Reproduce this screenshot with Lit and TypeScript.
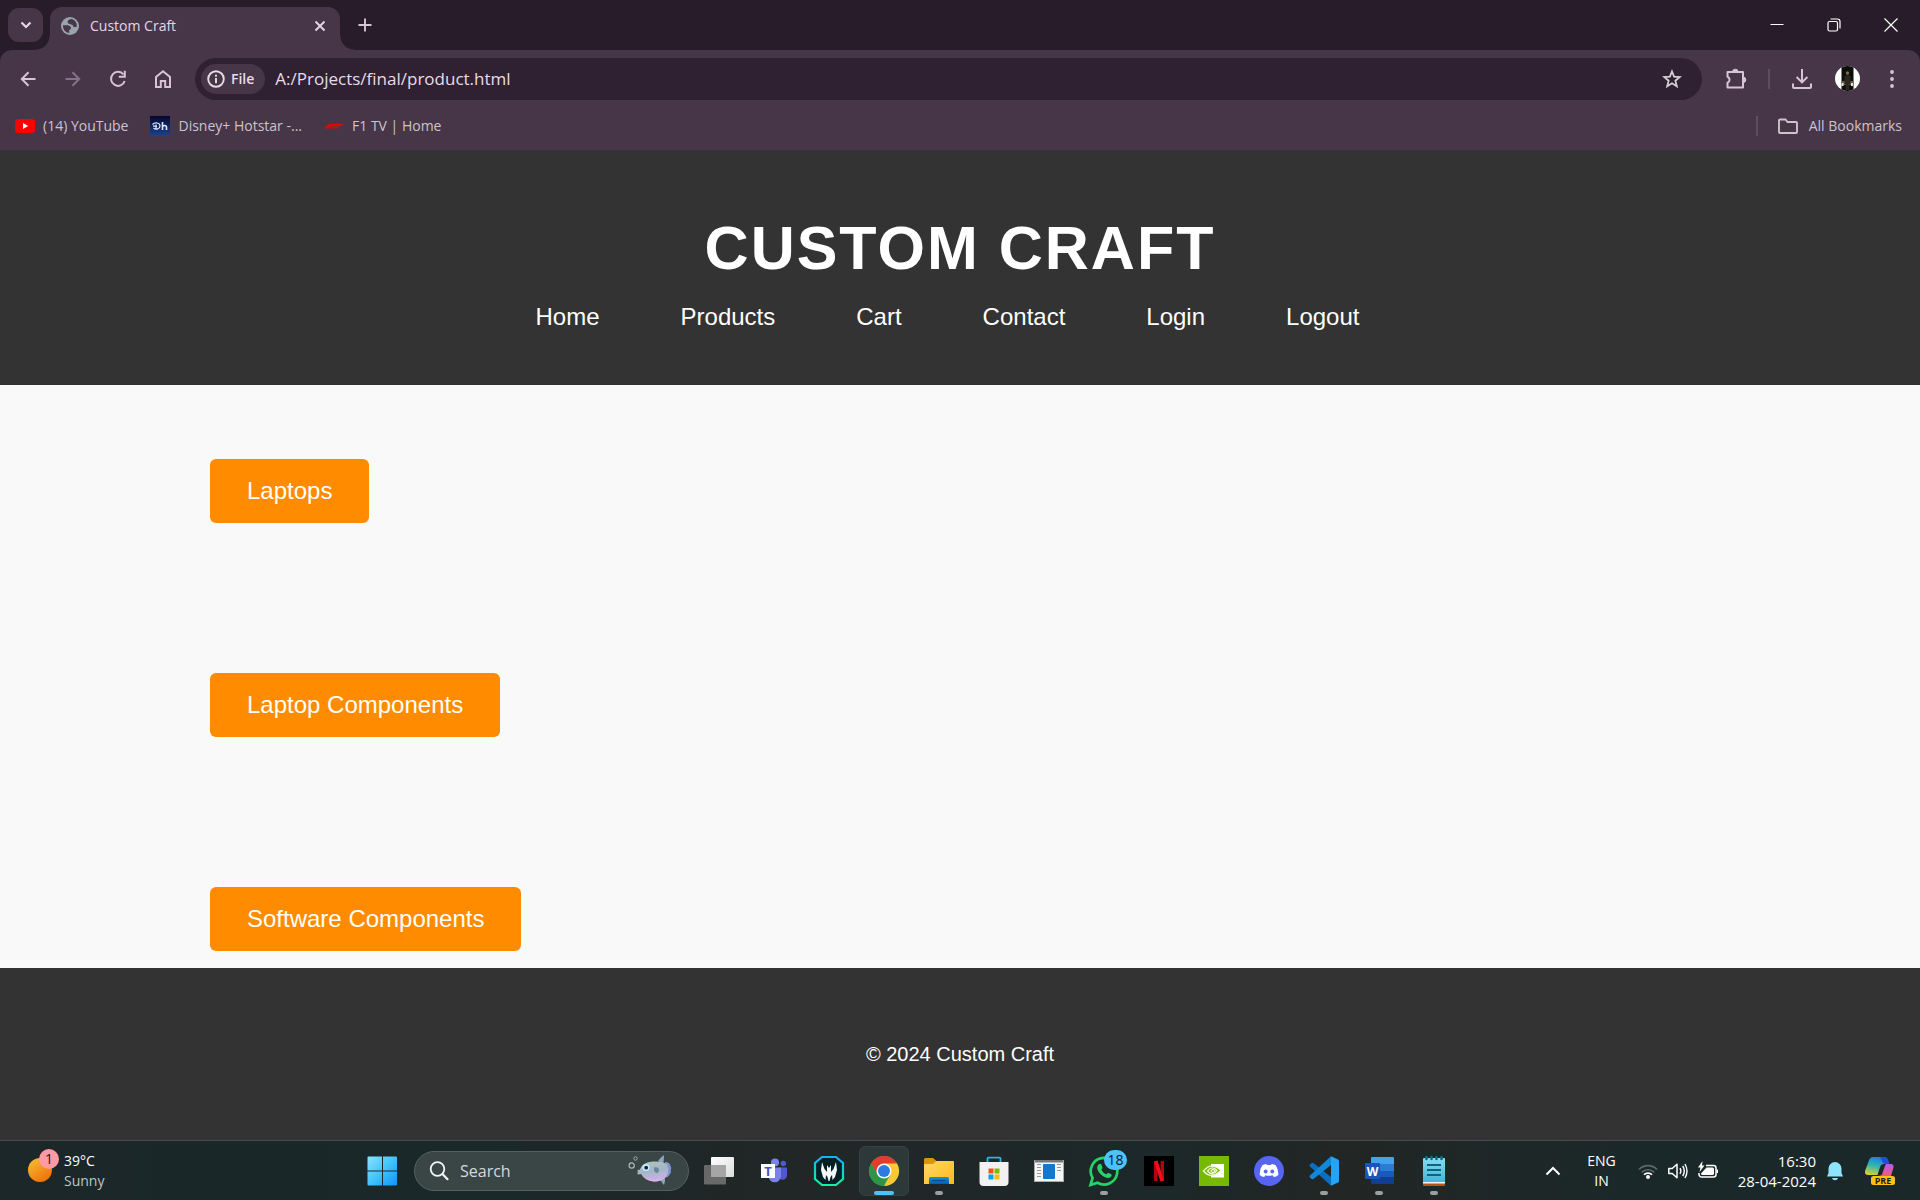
import { LitElement, html, svg, css, nothing } from "lit";
import { customElement, property } from "lit/decorators.js";

const icons: Record<string, unknown> = {
  chevronDown: svg`<path d="M5.5 7.5 10 12l4.5-4.5" fill="none" stroke="currentColor" stroke-width="2.2"/>`,
  globe: svg`<circle cx="10" cy="10" r="9" fill="#9aa3ab"/>
    <path d="M12 3q-4 .2-4.500 3 .2 2 3 2.200 2.800.3 3 2.800h3.300A7.200 7.200 0 0 0 12 3zM3 9.200h4.500q3.500.5 3.500 3-.2 1.300-1.800 1.800V17A7 7 0 0 1 3 9.200z" fill="#463648"/>`,
  close: svg`<path d="m5.500 5.500 9 9m0-9-9 9" fill="none" stroke="currentColor" stroke-width="1.900"/>`,
  plus: svg`<path d="M10 3.500v13M3.500 10h13" fill="none" stroke="currentColor" stroke-width="1.900"/>`,
  minimize: svg`<path d="M3.500 9.500h13" stroke="currentColor" stroke-width="1"/>`,
  restore: svg`<rect x="4" y="6.500" width="9.500" height="9.500" rx="1.500" fill="none" stroke="currentColor" stroke-width="1.200"/>
    <path d="M6.500 4h7a2.500 2.500 0 0 1 2.500 2.500v7" fill="none" stroke="currentColor" stroke-width="1.200"/>`,
  winClose: svg`<path d="m3.500 3.500 13 13m0-13-13 13" fill="none" stroke="currentColor" stroke-width="1.200"/>`,
  back: svg`<path d="M17.500 10H4m6.500-6.700L3.800 10l6.700 6.700" fill="none" stroke="currentColor" stroke-width="2"/>`,
  forward: svg`<path d="M2.500 10H16M9.500 3.300 16.200 10l-6.700 6.700" fill="none" stroke="currentColor" stroke-width="2"/>`,
  reload: svg`<path d="M16.700 12A7 7 0 1 1 15.500 5.500" fill="none" stroke="currentColor" stroke-width="2"/>
    <path d="M17.800 1.800v7h-7v-2h5v-5z" fill="currentColor"/>`,
  home: svg`<path d="M3 18V8l7-5.800L17 8v10h-4.800v-6H7.800v6z" fill="none" stroke="currentColor" stroke-width="2"/>`,
  info: svg`<circle cx="10" cy="10" r="7.800" fill="none" stroke="currentColor" stroke-width="1.900"/>
    <path d="M10 9v5.200M10 5.800v2" stroke="currentColor" stroke-width="1.900"/>`,
  star: svg`<path d="m10 2.500 2.100 5.200 5.600.4-4.300 3.600 1.400 5.500L10 14.200l-4.800 3 1.400-5.500-4.300-3.600 5.600-.4z" fill="none" stroke="currentColor" stroke-width="1.800"/>`,
  puzzle: svg`<path d="M1.500 3h15.500v15.500H1.500v-4.700a3.200 3.200 0 0 0 0-6z" fill="none" stroke="currentColor" stroke-width="2" stroke-linejoin="round"/>
    <path d="M6.500 3a2.800 2.800 0 0 1 5.600 0zM17 8a2.800 2.800 0 0 1 0 5.600z" fill="currentColor" stroke="currentColor"/>`,
  download: svg`<path d="M10 0v13M4.600 8l5.400 5.400L15.400 8M1 14.500V18a1 1 0 0 0 1 1h16a1 1 0 0 0 1-1v-3.500" fill="none" stroke="currentColor" stroke-width="2"/>`,
  dots: svg`<g fill="currentColor"><circle cx="10" cy="3" r="1.900"/><circle cx="10" cy="10" r="1.900"/><circle cx="10" cy="17" r="1.900"/></g>`,
  folder: svg`<path d="M1 4.500a1 1 0 0 1 1-1h5.500l2 2.500H18a1 1 0 0 1 1 1v9a1 1 0 0 1-1 1H2a1 1 0 0 1-1-1z" fill="none" stroke="currentColor" stroke-width="1.900"/>`,
  youtube: svg`<rect x="0" y="3" width="20" height="14" rx="3.500" fill="#f00"/><path d="m8 7 5.200 3L8 13z" fill="#fff"/>`,
  hotstar: svg`<defs><linearGradient id="hs" x1="0" y1="0" x2="0" y2="1"><stop offset="0" stop-color="#05062c"/><stop offset="1" stop-color="#1b4391"/></linearGradient></defs>
    <rect width="20" height="20" fill="url(#hs)"/>
    <path d="M2.500 8.500C5 6 10 6.500 10 10c0 3-4 3.800-6.500 2.300M3 10.200h4M6 8.500v5" fill="none" stroke="#dfe8ff" stroke-width="1.200"/>
    <path d="M12.500 6v8m0-3c.5-2 4-2.300 4 .3V14" fill="none" stroke="#dfe8ff" stroke-width="1.600"/>`,
  f1: svg`<path d="M0 12.500 3.500 9Q4.700 7.800 6.500 7.800H19.500L17 10H8.500Q7 10 6.200 10.800L4.500 12.500z" fill="#e10600"/><path d="M6 12.500 7.200 11.300Q7.900 10.500 9 10.500H15.500L13.500 12.500z" fill="#e10600"/>`,
  avatar: svg`<defs><clipPath id="av"><circle cx="12.500" cy="12.500" r="12.500"/></clipPath></defs>
    <g clip-path="url(#av)"><rect width="25" height="25" fill="#fff"/><rect x="6.500" width="12" height="25" fill="#0b0f0b"/>
    <rect x="6.500" y="15" width="12" height="4" fill="#6a5a44"/><circle cx="12.500" cy="7" r="1.700" fill="#8a6a45"/>
    <path d="M9.500 10q3-2 6 0v8h-1.300v6h-3.500v-6H9.500z" fill="#2c2620"/><path d="M6.500 17h2v3h-2zm9.500 0h2v3h-2z" fill="#e4e0d6"/></g>`,
  weather: svg`<defs><linearGradient id="sun" x1="0" y1="0" x2=".7" y2="1"><stop offset="0" stop-color="#f5c331"/><stop offset="1" stop-color="#f0700c"/></linearGradient></defs>
    <circle cx="12" cy="21" r="12" fill="url(#sun)"/><circle cx="21" cy="10" r="10" fill="#ff99a4"/>
    <text x="21" y="15" text-anchor="middle" font-size="14" fill="#1a1a1a">1</text>`,
  windows: svg`<defs><linearGradient id="wn" gradientUnits="userSpaceOnUse" x1="0" y1="0" x2="30" y2="30"><stop offset="0" stop-color="#8fe3ff"/><stop offset=".5" stop-color="#43c4fb"/><stop offset="1" stop-color="#0a93fb"/></linearGradient></defs>
    <path d="M1.500.5H15v14H.5v-13a1 1 0 0 1 1-1zM16 .5h13a1 1 0 0 1 1 1v13H16zM.5 15.500H15v14H1.500a1 1 0 0 1-1-1zM16 15.500h14v13a1 1 0 0 1-1 1H16z" fill="url(#wn)"/>`,
  search: svg`<circle cx="8.500" cy="8" r="6.800" fill="none" stroke="currentColor" stroke-width="1.800"/><path d="m13.500 13 5 5.200" stroke="currentColor" stroke-width="2.200" stroke-linecap="round"/>`,
  fish: svg`<defs><linearGradient id="fs" x1="0" y1="0" x2=".3" y2="1"><stop offset="0" stop-color="#b4c9b4"/><stop offset=".55" stop-color="#a3b6c9"/><stop offset="1" stop-color="#cbb0e0"/></linearGradient></defs>
    <path d="M30 6q3-4 6-6 0 5-.7 9zM32 24q2 4 4 6 1.500-4 1-7z" fill="#8aa6bd"/>
    <path d="M37 7q5 0 5.500 4 1.500 2 .3 4 .7 3-1.300 4.500-1 3-4.500 3z" fill="#7f96d2"/>
    <path d="M11.500 15Q14 7 25 6.500q10-.5 14 3 2.500 6-.5 12Q34 26.500 26 26.500q-9-.5-13-7.500l-3 .5q-1.500-1 0-2.200-1.200-1.800 0-2.600z" fill="url(#fs)"/>
    <path d="M16 22.500q9 4 20 1-4 3.500-10 3-6.500-.5-10-4z" fill="#dcb8ee" opacity=".8"/>
    <circle cx="18" cy="12.500" r="3.500" fill="#c4efff"/><circle cx="18.200" cy="12.700" r="1.900" fill="#10204a"/>
    <path d="M26 12.500q5-1 5 3-.5 3-3 2.500-2.500-2-2-5.500z" fill="#66889a"/>
    <circle cx="3.700" cy="10.500" r="2.600" fill="none" stroke="#a9bdb2" stroke-width="1.200"/><circle cx="7.500" cy="3.500" r="1.700" fill="none" stroke="#94a9a6"/>`,
  taskView: svg`<defs><linearGradient id="tv" x1="0" y1="0" x2="1" y2="1"><stop offset="0" stop-color="#fff"/><stop offset="1" stop-color="#dcdcdc"/></linearGradient></defs>
    <rect x="7" y="1" width="23" height="20" rx="1" fill="url(#tv)"/><rect x="0" y="9" width="22" height="19.500" rx="1" fill="#686868"/><rect x="7" y="9" width="15" height="12" fill="#a5a5a5"/>`,
  teams: svg`<circle cx="16" cy="6.500" r="4" fill="#7b83eb"/><circle cx="24.300" cy="7.500" r="2.800" fill="#5059c9"/>
    <path d="M20 11.500h8v8a4.500 4.500 0 0 1-7 3.500z" fill="#5059c9"/><path d="M9 11.500h13v8.500a6.300 6.300 0 0 1-12.600 0z" fill="#7b83eb"/>
    <rect x="2" y="8" width="14" height="14" fill="#fff"/><text x="9" y="20" text-anchor="middle" font-size="13" font-weight="700" fill="#4b53bc">T</text>`,
  predator: svg`<defs><linearGradient id="pr" x1="0" y1="0" x2="0" y2="1"><stop offset="0" stop-color="#19aef5"/><stop offset="1" stop-color="#12f2a0"/></linearGradient></defs>
    <path d="M8 1h14l7 6v16l-7 6H8l-7-6V7z" fill="#041f26" stroke="url(#pr)" stroke-width="2.200"/>
    <path d="m8 6 2.500 7 2.500 3V9l2 3 2-3v7l2.500-3L22 6l1 8-2 7-2.500 3-.5-5-1.500 2-1 4h-1l-1-4-1.500-2-.5 5L9 21l-2-7z" fill="#f4f9f9"/>`,
  chrome: svg`<circle cx="15" cy="15" r="15" fill="#34a853"/>
    <path d="M2 7.500A15 15 0 0 1 28 7.500L15 15l-6.500 3.700z" fill="#e33b2e"/>
    <path d="M15 7.500h13A15 15 0 0 1 15 30l6.500-11.300z" fill="#fcc934"/><path d="M2 7.500 8.500 18.700 15 22.500h2.200L15 30A15 15 0 0 1 2 7.500z" fill="#2d9547"/>
    <circle cx="15" cy="15" r="7.500" fill="#fff"/><circle cx="15" cy="15" r="6" fill="#2c7be5"/>`,
  explorer: svg`<defs><linearGradient id="ex" x1="0" y1="0" x2="1" y2="1"><stop offset="0" stop-color="#ffd968"/><stop offset="1" stop-color="#fbb91c"/></linearGradient><linearGradient id="eb" x1="0" y1="0" x2="0" y2="1"><stop offset="0" stop-color="#1790df"/><stop offset="1" stop-color="#0a5cae"/></linearGradient></defs>
    <path d="M0 3.500A1.500 1.500 0 0 1 1.500 2H9l3.500 3v4H0z" fill="#d9960a"/><path d="M0 9q0-1 1-1h8l3.500-3H29q1 0 1 1v22H0z" fill="url(#ex)"/>
    <path d="M5 28v-5.500A1.500 1.500 0 0 1 6.500 21h17a1.500 1.500 0 0 1 1.500 1.500V28z" fill="url(#eb)"/><path d="M8 24.500h14" stroke="#0a4a8e" stroke-width="1.200"/>`,
  store: svg`<path d="M8.500 7V2.500A.8.800 0 0 1 9.300 1.700h11.400a.8.800 0 0 1 .8.800V7" fill="none" stroke="#2ab3ee" stroke-width="1.800"/>
    <path d="M.5 6h29v20a4 4 0 0 1-4 4h-21a4 4 0 0 1-4-4z" fill="#f1f1f1"/>
    <path d="M9.500 12.500h5v5h-5z" fill="#f25022"/><path d="M15.500 12.500h5v5h-5z" fill="#7fba00"/><path d="M9.500 18.500h5v5h-5z" fill="#00a4ef"/><path d="M15.500 18.500h5v5h-5z" fill="#ffb900"/>`,
  windowApp: svg`<rect x="0" y="4" width="30" height="22" fill="#f5f5f5"/><path d="M0 4h30v2.500H0z" fill="#777"/><path d="M0 4h1v22H0zM29 4h1v22h-1zM0 25h30v1H0z" fill="#aaa"/>
    <rect x="9" y="8" width="12" height="15" rx="1" fill="#1277cf"/>
    <path d="M3 8.500h4M3 11.500h4M3 14.500h4M3 17.500h4M3 20.500h4M23 8.500h4M23 11.500h4M23 14.500h4" stroke="#999" stroke-width="1"/>`,
  whatsapp: svg`<path d="M1.500 29 3.600 22A13.300 13.300 0 1 1 8.500 26.800z" fill="none" stroke="#25d366" stroke-width="2.700"/>
    <path d="M9.500 8.500c1.500-1.300 2.500-.8 3 .5l1 2.500c.3.800-1.300 1.800-1 2.500 1 2 2.500 3.300 4.500 4.200.8.300 1.700-1.600 2.500-1.300l2.800 1.400c.8.400.2 2.200-.8 3-1.500 1-3.500.900-6-.2-3-1.400-5.500-4-6.800-7-.8-2-.7-4.300.8-5.600z" fill="#25d366"/>`,
  netflix: svg`<rect width="30" height="30" fill="#000"/><path d="M11.700 5v20M18.300 5v20" stroke="#b1060f" stroke-width="3.400"/><path d="M11.800 5 18.200 25" stroke="#f0101a" stroke-width="3.600"/>`,
  nvidia: svg`<rect width="30" height="30" fill="#76b900"/><rect x="12" y="8" width="13" height="13.500" fill="#fff"/>
    <path d="M4.500 15Q12 6.500 22 14q-8 9-17.500 1z" fill="#76b900"/>
    <path d="M4.500 15Q12 5.500 22 14.500 12 24 4.500 15zm4 0Q13 9 18 14.500 13 20.500 8.500 15zm3.500 0q2-3 4 0-2 3-4 0z" fill="none" stroke="#eef7da" stroke-width="1.300"/>`,
  discord: svg`<circle cx="15" cy="15" r="15" fill="#5865f2"/>
    <path d="M8.300 9.300Q10 8.200 12.300 7.900l.6 1.200q2.100-.3 4.200 0l.6-1.200q2.300.3 4 1.400 3 4.600 2.600 9.600-2 1.700-4.600 2.200l-1-1.800q-3.700 1-7.400 0l-1 1.800q-2.600-.5-4.600-2.200-.4-5 2.600-9.600z" fill="#fff"/>
    <ellipse cx="11.700" cy="15.500" rx="1.900" ry="2.100" fill="#5865f2"/><ellipse cx="18.300" cy="15.500" rx="1.900" ry="2.100" fill="#5865f2"/>`,
  vscode: svg`<path d="M22 .3 29 3.500q1 .5 1 1.500v20q0 1-1 1.500L22 29.700z" fill="#24a4f2"/>
    <path d="M22 29.700 1 10.500q-1-1 0-2L2.700 7q.8-.6 1.700 0L22 21z" fill="#0a6fc2"/><path d="M22 .3 1 19.500q-1 1 0 2L2.700 23q.8.600 1.700 0L22 9z" fill="#1488d8"/>`,
  word: svg`<path d="M8 1h21a1 1 0 0 1 1 1v6H7V2a1 1 0 0 1 1-1z" fill="#41a5ee"/><path d="M7 8h23v7H7z" fill="#2b7cd3"/><path d="M7 15h23v6H7z" fill="#185abd"/><path d="M7 21h23v6a1 1 0 0 1-1 1H8a1 1 0 0 1-1-1z" fill="#103f91"/>
    <rect x="1" y="7" width="15" height="16" rx="1" fill="#1a56b8"/><text x="8.500" y="19.500" text-anchor="middle" font-size="12" font-weight="700" fill="#fff">W</text>`,
  notepad: svg`<rect x="4" y="25" width="22" height="5" rx="1" fill="#b5550f"/><rect x="4" y="24" width="22" height="3.500" fill="#f5f5f5"/>
    <defs><linearGradient id="np" x1="0" y1="0" x2="0" y2="1"><stop offset="0" stop-color="#86dcf0"/><stop offset="1" stop-color="#45b5d6"/></linearGradient></defs>
    <path d="M4 3q0-1 1-1h20q1 0 1 1v23H4z" fill="url(#np)"/>
    <path d="M8 9h14M8 14h14M8 19h14" stroke="#0c6482" stroke-width="2"/>
    <path d="M7.500 1v2M12.500 1v2M17.500 1v2M22.500 1v2" stroke="#0f6a88" stroke-width="2.600" stroke-linecap="round"/>`,
  chevronUp: svg`<path d="m3.500 13.500 6.500-6.500 6.500 6.500" fill="none" stroke="currentColor" stroke-width="2"/>`,
  wifi: svg`<g fill="none" stroke-width="1.700"><path d="M1 8.500a12.500 12.500 0 0 1 18 0M3.800 11.400a8.600 8.600 0 0 1 12.400 0" stroke="#5d6869"/><path d="M6 13.800a5.400 5.400 0 0 1 8 0" stroke="#fff"/></g><circle cx="10" cy="16" r="2" fill="#fff"/>`,
  speaker: svg`<path d="M.8 7.500h3.400L9 3.200v13.600l-4.800-4.300H.8z" fill="none" stroke="currentColor" stroke-width="1.500" stroke-linejoin="round"/>
    <path d="M12 7.200q1.800 2.800 0 5.600M14.700 5q3.200 5 0 10M17 3q4 7 0 14" fill="none" stroke="currentColor" stroke-width="1.400"/>`,
  battery: svg`<path d="M8 4.500h7.500A2.500 2.500 0 0 1 18 7v6.500a2.500 2.500 0 0 1-2.500 2.500H3.500A2.500 2.500 0 0 1 1 13.500V12" fill="none" stroke="currentColor" stroke-width="1.500"/>
    <path d="M8.500 6.500h6a1.500 1.500 0 0 1 1.500 1.500v4.500a1.500 1.500 0 0 1-1.500 1.500h-10A1.500 1.500 0 0 1 3 12.500zM18.500 8.500h1.500v3.500h-1.500z" fill="currentColor"/>
    <path d="M4.500 0 0 6.500h2.500L1.500 11 6.500 4.500H4z" fill="currentColor"/>`,
  bell: svg`<path d="M9 1a6.500 6.500 0 0 1 6.500 6.500V12l1.500 3.500H1L2.500 12V7.500A6.500 6.500 0 0 1 9 1zM6 17h6q-.5 2.200-3 2.200T6 17z" fill="#8fe4fd"/>`,
  copilot: svg`<defs><linearGradient id="ca" x1=".6" y1="0" x2=".3" y2="1"><stop offset="0" stop-color="#1d7be8"/><stop offset=".5" stop-color="#2fb6b0"/><stop offset="1" stop-color="#d9d02e"/></linearGradient><linearGradient id="cb" x1=".5" y1="0" x2=".5" y2="1"><stop offset="0" stop-color="#b35cf5"/><stop offset="1" stop-color="#f5596e"/></linearGradient></defs>
    <path d="M8 1h11q3 0 4 3l1 4h-5q-3 0-4 3l-2.500 8H3q-3.500 0-3-4L4 4.500Q5 1 8 1z" fill="url(#ca)"/><path d="M15 1h4q3 0 4 3l1.200 4H20q-2 0-3-3z" fill="#1f4fd8"/>
    <path d="M21 8h5q3 0 2.500 3.500L26 20H13l2.500-.5q1.500-.5 2-2.500L20 10z" fill="url(#cb)"/>
    <rect x="6" y="20" width="24" height="9" rx="2.500" fill="#fcc21b"/><text x="18" y="28" text-anchor="middle" font-size="9" font-weight="700" fill="#1d1a10">PRE</text>`,
};

const icon = (name: string, w = 20, h = w) =>
  html`<svg class="icon" width=${w} height=${h} viewBox="0 0 ${w} ${h}" aria-hidden="true">${icons[name]}</svg>`;

const base = css`
  :host, *, *::before, *::after { box-sizing: border-box; }
  button, input { font: inherit; color: inherit; background: none; border: 0; padding: 0; margin: 0; min-width: 0; outline: none; }
  a { color: inherit; text-decoration: none; }
  ul { list-style: none; margin: 0; padding: 0; }
  .icon { display: block; flex: none; overflow: visible; }
`;

@customElement("browser-chrome")
export class BrowserChrome extends LitElement {
  @property() url = "A:/Projects/final/product.html";

  static styles = [base, css`
    :host { display: block; background: #281c2a; color: #e4d7e4; font: 14px/20px "Open Sans", "Noto Sans", sans-serif; }
    button { display: grid; place-items: center; }
    .strip { display: flex; align-items: center; height: 50px; padding: 0 1px 0 8px; }
    .tab-search { width: 35px; height: 34px; border-radius: 11px; background: #463648; }
    .tab { position: relative; align-self: flex-end; display: flex; align-items: center; width: 290px; height: 43px; margin: 0 15px 0 7px; padding: 0 10px 6px; border-radius: 12px 12px 0 0; background: #463648; }
    .tab::before, .tab::after { content: ""; position: absolute; bottom: 0; width: 14px; height: 14px; }
    .tab::before { right: 100%; background: radial-gradient(circle at 0 0, transparent 13px, #463648 14px); }
    .tab::after { left: 100%; background: radial-gradient(circle at 100% 0, transparent 13px, #463648 14px); }
    .tab-title { flex: 1; padding-left: 10px; }
    .new-tab { color: #d8c3d8; }
    .controls { display: flex; margin-left: auto; color: #fff; }
    .controls button { width: 57px; height: 50px; }
    .bar { display: flex; align-items: center; height: 57px; padding: 0 18px; background: #463648; border-radius: 12px 12px 0 0; color: #d8c3d8; }
    .nav { display: flex; gap: 25px; margin-right: 22px; }
    .nav button:disabled { color: #85718a; }
    .omni { flex: 1; display: flex; align-items: center; height: 42px; padding: 0 20px 0 6px; border-radius: 21px; background: #2f2131; color: #e8dce8; }
    .chip { display: flex; align-items: center; gap: 5px; height: 30px; padding: 0 11px 0 5px; border-radius: 15px; background: #463648; font-weight: 600; }
    .url { flex: 1; padding-left: 10px; font-size: 17px; line-height: 24px; }
    .star { color: #d8ccd8; }
    .tools { display: flex; align-items: center; margin-left: 24px; }
    .sep { width: 2px; height: 20px; background: #614d63; }
    .tools .sep { margin: 0 22px; }
    .tools .avatar { margin: 0 22px 0 23px; }
    .marks { display: flex; align-items: center; height: 44px; padding: 0 18px 5px 15px; background: #463648; border-bottom: 1px solid #3a313b; color: #cdc2ce; }
    .marks a, .marks button { display: flex; align-items: center; gap: 8px; }
    .list { display: flex; gap: 22px; }
    .marks .sep { margin: 0 20px 0 auto; }
    .marks .all { gap: 11px; }
  `];

  render() {
    return html`
      <div class="strip">
        <button class="tab-search" aria-label="Search tabs">${icon("chevronDown")}</button>
        <div class="tab">
          ${icon("globe")}<span class="tab-title">Custom Craft</span>
          <button aria-label="Close tab">${icon("close")}</button>
        </div>
        <button class="new-tab" aria-label="New tab">${icon("plus")}</button>
        <div class="controls">
          <button aria-label="Minimize">${icon("minimize")}</button>
          <button aria-label="Restore">${icon("restore")}</button>
          <button aria-label="Close window">${icon("winClose")}</button>
        </div>
      </div>
      <div class="bar">
        <div class="nav">
          <button aria-label="Back">${icon("back")}</button>
          <button aria-label="Forward" disabled>${icon("forward")}</button>
          <button aria-label="Reload">${icon("reload")}</button>
          <button aria-label="Home">${icon("home")}</button>
        </div>
        <div class="omni">
          <button class="chip">${icon("info")}File</button>
          <input class="url" type="text" aria-label="Address" .value=${this.url}>
          <button class="star" aria-label="Bookmark this tab">${icon("star")}</button>
        </div>
        <div class="tools">
          <button aria-label="Extensions">${icon("puzzle")}</button>
          <span class="sep"></span>
          <button aria-label="Downloads">${icon("download")}</button>
          <button class="avatar" aria-label="Profile">${icon("avatar", 25)}</button>
          <button aria-label="Menu">${icon("dots")}</button>
        </div>
      </div>
      <div class="marks">
        <div class="list">
          <a href="#youtube">${icon("youtube")}(14) YouTube</a>
          <a href="#hotstar">${icon("hotstar")}Disney+ Hotstar -...</a>
          <a href="#f1tv">${icon("f1")}F1 TV | Home</a>
        </div>
        <span class="sep"></span>
        <button class="all">${icon("folder")}All Bookmarks</button>
      </div>
    `;
  }
}

@customElement("shop-page")
export class ShopPage extends LitElement {
  private links = ["Home", "Products", "Cart", "Contact", "Login", "Logout"];
  private categories = ["Laptops", "Laptop Components", "Software Components"];

  static styles = [base, css`
    :host { display: flex; flex-direction: column; background: #f9f9f9; color: #fff; font: 24px/28px "Liberation Sans", Arial, sans-serif; }
    header { padding: 62px 24px 54px; background: #333; text-align: center; }
    h1 { margin: 0 0 20px; font-size: 61px; line-height: 70px; letter-spacing: 2px; text-transform: uppercase; }
    .links { display: flex; justify-content: center; gap: 81px; padding-right: 25px; }
    main { flex: 1; width: 100%; max-width: 1500px; margin: 0 auto; padding: 74px 0 17px; }
    .cats { display: flex; flex-direction: column; align-items: flex-start; gap: 150px; }
    .cat { display: block; padding: 18px 37px; border-radius: 6px; background: #ff8c00; }
    footer { padding: 74px 24px; background: #333; text-align: center; font-size: 20px; line-height: 24px; }
  `];

  render() {
    return html`
      <header>
        <h1>Custom Craft</h1>
        <nav><ul class="links">${this.links.map((l) => html`<li><a href="#${l.toLowerCase()}">${l}</a></li>`)}</ul></nav>
      </header>
      <main>
        <ul class="cats">${this.categories.map((c) => html`<li><a class="cat" href="#${c.toLowerCase().replace(" ", "-")}">${c}</a></li>`)}</ul>
      </main>
      <footer>© 2024 Custom Craft</footer>
    `;
  }
}

interface App { name: string; icon: string; state?: "active" | "running"; badge?: number }

@customElement("task-bar")
export class TaskBar extends LitElement {
  private apps: App[] = [
    { name: "Task View", icon: "taskView" },
    { name: "Teams", icon: "teams" },
    { name: "PredatorSense", icon: "predator" },
    { name: "Chrome", icon: "chrome", state: "active" },
    { name: "File Explorer", icon: "explorer", state: "running" },
    { name: "Microsoft Store", icon: "store" },
    { name: "Window", icon: "windowApp" },
    { name: "WhatsApp", icon: "whatsapp", state: "running", badge: 18 },
    { name: "Netflix", icon: "netflix" },
    { name: "NVIDIA", icon: "nvidia" },
    { name: "Discord", icon: "discord" },
    { name: "Visual Studio Code", icon: "vscode", state: "running" },
    { name: "Word", icon: "word", state: "running" },
    { name: "Notepad", icon: "notepad", state: "running" },
  ];

  static styles = [base, css`
    :host { display: flex; align-items: center; height: 60px; background: linear-gradient(90deg, #1b2728, #1a2829 25%, #222626 42%, #1c2829 60%, #222625 70%, #1b2829 85%); border-top: 1px solid #444b4b; color: #fff; font: 14px/20px "Open Sans", "Noto Sans", sans-serif; }
    button { display: grid; place-items: center; }
    .weather { display: flex; align-items: center; gap: 5px; width: 357px; padding-left: 28px; text-align: left; }
    .weather .sub { display: block; color: #bfc5c5; }
    .apps { display: flex; align-items: center; gap: 5px; }
    .app { position: relative; width: 50px; height: 50px; border: 1px solid transparent; border-radius: 6px; }
    .app.active { background: #2d3839; border-color: #364142; }
    .mark { position: absolute; bottom: 0; left: 20px; width: 8px; height: 4px; border-radius: 2px; background: #9a9fa0; }
    .active .mark { left: 14px; width: 20px; background: #4cc2ff; }
    .badge { position: absolute; top: 3px; left: 24px; width: 23px; height: 20px; border-radius: 10px; background: #4cc2ff; color: #0b1a22; line-height: 20px; }
    .search { display: flex; align-items: center; width: 275px; height: 40px; margin: 0 0 0 2px; padding: 0 16px 0 14px; border: 1px solid #556061; border-radius: 20px; background: #3a4546; color: #f2f5f5; }
    .search input { flex: 1; padding-left: 11px; font-size: 16px; line-height: 22px; }
    .search input::placeholder { color: #d5dada; opacity: 1; }
    .tray { display: flex; align-items: center; margin-left: auto; padding-right: 25px; text-align: center; }
    .lang { margin: 0 22px 0 24px; }
    .status { display: flex; gap: 10px; margin-right: 20px; }
    .clock { display: block; text-align: right; margin-right: 10px; font-size: 15px; }
    .bell { margin-right: 21px; }
  `];

  render() {
    return html`
      <button class="weather">${icon("weather", 31, 43)}<span>39°C<span class="sub">Sunny</span></span></button>
      <div class="apps">
        <button class="app" aria-label="Start">${icon("windows", 30)}</button>
        <label class="search">${icon("search")}<input type="text" aria-label="Search" placeholder="Search">${icon("fish", 44, 31)}</label>
        ${this.apps.map((a) => html`
          <button class="app ${a.state ?? ""}" aria-label=${a.name}>
            ${icon(a.icon, 30)}
            ${a.state ? html`<span class="mark"></span>` : nothing}
            ${a.badge ? html`<span class="badge">${a.badge}</span>` : nothing}
          </button>`)}
      </div>
      <div class="tray">
        <button aria-label="Hidden icons">${icon("chevronUp")}</button>
        <button class="lang"><span>ENG<br>IN</span></button>
        <button class="status" aria-label="Network, volume, battery">
          ${icon("wifi")}${icon("speaker")}${icon("battery")}
        </button>
        <button class="clock">16:30<br>28-04-2024</button>
        <button class="bell" aria-label="Notifications">${icon("bell", 18, 20)}</button>
        <button aria-label="Copilot">${icon("copilot", 30)}</button>
      </div>
    `;
  }
}

@customElement("app-root")
export class AppRoot extends LitElement {
  static styles = css`
    :host { display: grid; grid-template-rows: auto 1fr auto; min-height: 100vh; }
  `;

  render() {
    return html`<browser-chrome></browser-chrome><shop-page></shop-page><task-bar></task-bar>`;
  }
}
